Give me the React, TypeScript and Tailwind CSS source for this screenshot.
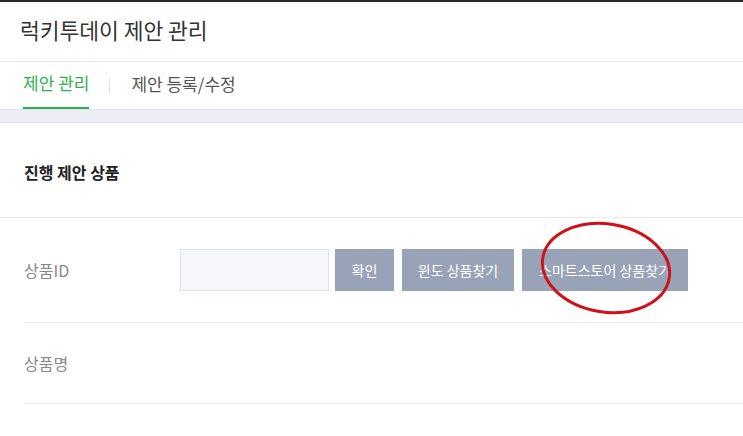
const font = { fontFamily: '"Noto Sans CJK KR", "Noto Sans", sans-serif' };

export default function App() {
  return (
    <div className="w-[743px] h-[436px] overflow-hidden bg-white border-t-2 border-[#2a2a2a]" style={font}>
      {/* page title */}
      <div className="h-[60px] flex items-center pl-5 border-b border-[#e3e5e8]">
        <h1 className="text-[21.5px] text-[#333] pb-[2px]">럭키투데이 제안 관리</h1>
      </div>

      {/* tabs */}
      <div className="h-[47px] flex items-end pl-[23px]">
        <div className="h-full flex flex-col justify-center border-b-2 border-[#2eb24f] pb-[4px]">
          <span className="text-[17px] text-[#2eb24f]">제안 관리</span>
        </div>
        <div className="self-center w-px h-4 bg-[#e2e4e8] ml-5 mr-[21px]" />
        <div className="h-full flex items-center pb-[4px]">
          <span className="text-[17px] text-[#555]">제안 등록/수정</span>
        </div>
      </div>

      <div className="h-[14px] bg-[#eceef3] border-y border-[#dfe2e8]" />

      {/* section */}
      <div className="h-[95px] flex items-center pl-6 border-b border-[#e8e9ec]">
        <h2 className="text-[16px] font-bold text-[#222] pt-1">진행 제안 상품</h2>
      </div>

      <div className="ml-6">
        <div className="h-[105px] flex items-center border-b border-[#e8e9ec]">
          <div className="w-[156px] text-[16px] text-[#888]">상품ID</div>
          <input className="w-[149px] h-[42px] bg-[#f5f7fb] border border-[#dde1e8] outline-none" />
          <div className="flex gap-2 ml-[6px]">
            <button className="h-[42px] w-[59px] bg-[#99a3b8] text-white text-[14px]">확인</button>
            <button className="h-[42px] w-[112px] bg-[#99a3b8] text-white text-[14px]">윈도 상품찾기</button>
            <div className="relative">
              <button className="h-[42px] w-[166px] bg-[#99a3b8] text-white text-[14px]">스마트스토어 상품찾기</button>
              {/* hand-drawn circle annotation */}
              <svg className="absolute left-[14px] top-[-29px] pointer-events-none" width="140" height="98" viewBox="0 0 140 98">
                <ellipse cx="70" cy="48" rx="64" ry="44" fill="none" stroke="#d0111a" strokeWidth="3" transform="rotate(9 70 48)" />
              </svg>
            </div>
          </div>
        </div>
        <div className="h-[81px] flex items-center border-b border-[#e8e9ec]">
          <div className="text-[16px] text-[#888]">상품명</div>
        </div>
      </div>
    </div>
  );
}
